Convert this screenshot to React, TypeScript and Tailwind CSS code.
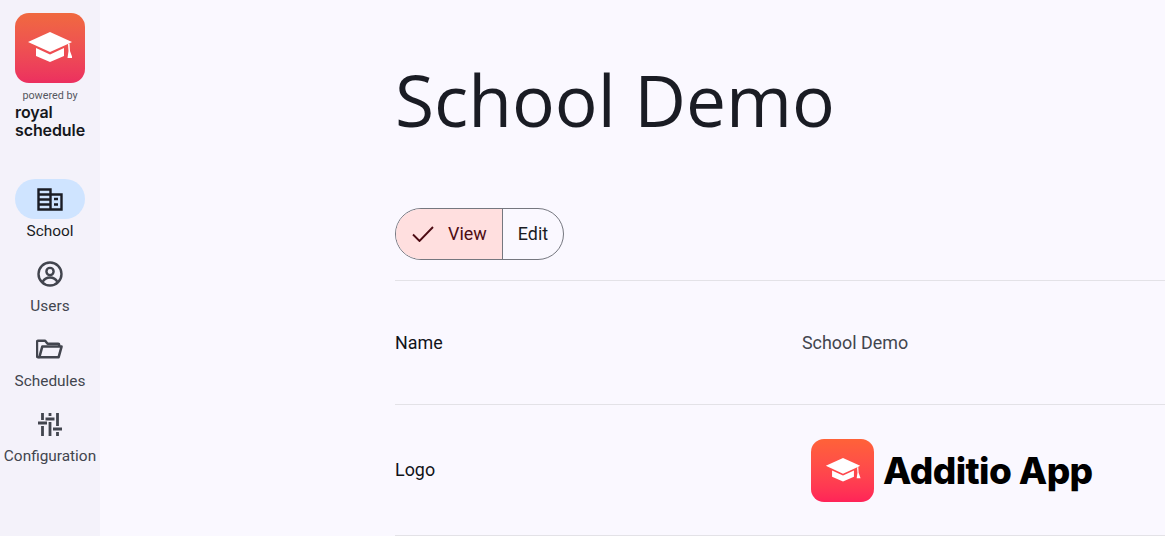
import type { ReactNode } from "react";

function Cap({ className }: { className: string }) {
  return (
    <svg viewBox="0 0 44 32" className={className}>
      <path d="M22 0 L44 10 L41 11.5 L22 20 L0 10 Z" fill="#fff" />
      <path d="M8 16 L22 22.5 L36 16 V24 L22 30 L8 24 Z" fill="#fff" />
      <path d="M40 12 L41.5 11.5 L42 19 L44.5 26 L39.5 26 L40.5 19 Z" fill="#fff" />
    </svg>
  );
}

function NavItem({ icon, label, active }: { icon: ReactNode; label: string; active?: boolean }) {
  return (
    <div className="flex flex-col items-center">
      <div className={`flex h-10 w-[70px] items-center justify-center rounded-full ${active ? "bg-[#cfe4ff]" : ""}`}>
        {icon}
      </div>
      <div className={`mt-[2px] h-[25px] whitespace-nowrap text-[15.4px] leading-5 ${active ? "text-[#1a1c24]" : "text-[#42454e]"}`}>
        {label}
      </div>
    </div>
  );
}

export default function App() {
  return (
    <div className="flex h-[536px] w-[1165px] overflow-hidden bg-[#faf8ff] font-['Roboto',sans-serif]">
      <aside className="flex w-[100px] shrink-0 flex-col items-center bg-[#f4f2fa] pt-[13px]">
        <div className="flex h-[70px] w-[70px] items-center justify-center rounded-[14px] bg-gradient-to-b from-[#f0693f] to-[#ec2f5f]">
          <Cap className="h-8 w-11" />
        </div>
        <div className="mt-[6px] text-[10.8px] leading-[13px] text-[#55575f]">powered by</div>
        <div className="mt-[1px] w-[70px] font-['Inter',sans-serif] text-[16px] font-semibold leading-[18px] tracking-[-0.1px] text-[#15171c]">
          royal
          <br />
          schedule
        </div>
        <nav className="mt-[40px] flex flex-col gap-[8px]">
          <NavItem
            active
            label="School"
            icon={
              <svg viewBox="0 0 26 23" className="h-[23px] w-[26px]" fill="none" stroke="#1a1c24" strokeWidth="2.4">
                <path d="M1.5 1.5H13.5V21.5H1.5Z M13.5 6.5H24.5V21.5H13.5Z" />
                <path d="M1.5 6.5H13.5 M1.5 11.5H13.5 M1.5 16.5H13.5 M17 11H21 M17 16.5H21" />
              </svg>
            }
          />
          <NavItem
            label="Users"
            icon={
              <svg viewBox="0 0 26 26" className="h-[26px] w-[26px]" fill="none" stroke="#42454e" strokeWidth="2.4">
                <circle cx="13" cy="13" r="11.5" />
                <circle cx="13" cy="10.5" r="3.6" />
                <path d="M5.5 21 C7.5 17.5 10 16.5 13 16.5 C16 16.5 18.5 17.5 20.5 21" />
              </svg>
            }
          />
          <NavItem
            label="Schedules"
            icon={
              <svg viewBox="0 0 28 20" className="h-5 w-[27px]" fill="none" stroke="#42454e" strokeWidth="2.6" strokeLinejoin="round">
                <path d="M3.5 18.5H2 A1 1 0 0 1 1 17.5V2.5 A1 1 0 0 1 2 1.5H9.5L12 4.5H23 A1 1 0 0 1 24 5.5V7" />
                <path d="M6.5 7.5H26.5L23.5 18.5H3.5Z" />
              </svg>
            }
          />
          <NavItem
            label="Configuration"
            icon={
              <svg viewBox="0 0 24 23" className="h-[23px] w-6" fill="none" stroke="#42454e" strokeWidth="2.8">
                <path d="M4.5 0V7 M4.5 13V23 M12 0V3 M12 9V23 M19.5 0V13 M19.5 19V23" />
                <path d="M0 10H9 M7.5 6H16.5 M15 16H24" />
              </svg>
            }
          />
        </nav>
      </aside>
      <main className="min-w-0 flex-1 pl-[295px]">
        <h1 className="mt-[58px] whitespace-nowrap font-['Open_Sans',sans-serif] text-[71.3px] font-normal leading-[84px] text-[#1a1c24]">
          School Demo
        </h1>
        <div className="mt-[66px] flex h-[52px] w-[169px] overflow-hidden rounded-full border border-[#75777f] text-[17.9px]">
          <div className="flex w-[107px] items-center border-r border-[#75777f] bg-[#ffdfdf] pl-[16px] text-[#4e0c14]">
            <svg viewBox="0 0 22 16" className="h-4 w-[22px]" fill="none" stroke="#4e0c14" strokeWidth="1.9">
              <path d="M1 8.5L7.5 15L21 1" />
            </svg>
            <span className="ml-[14px]">View</span>
          </div>
          <div className="flex flex-1 items-center justify-center text-[#1a1c24]">Edit</div>
        </div>
        <div className="mt-[20px] grid h-[124px] grid-cols-[407px_1fr] items-center border-t border-[#e3e2e7] pt-[2px] text-[17.9px]">
          <div className="text-[#111318]">Name</div>
          <div className="text-[#42454e]">School Demo</div>
        </div>
        <div className="grid h-[132px] grid-cols-[407px_1fr] items-center border-y border-[#e3e2e7] text-[17.9px]">
          <div className="text-[#111318]">Logo</div>
          <div className="flex items-center pl-[9px]">
            <div className="flex h-[63px] w-[63px] items-center justify-center rounded-[13px] bg-gradient-to-b from-[#ff6238] to-[#ff2358]">
              <Cap className="h-[25px] w-[40px]" />
            </div>
            <div className="ml-[9px] whitespace-nowrap font-['Inter',sans-serif] text-[37px] font-extrabold leading-none tracking-[-0.6px] text-black">
              Additio App
            </div>
          </div>
        </div>
      </main>
    </div>
  );
}
